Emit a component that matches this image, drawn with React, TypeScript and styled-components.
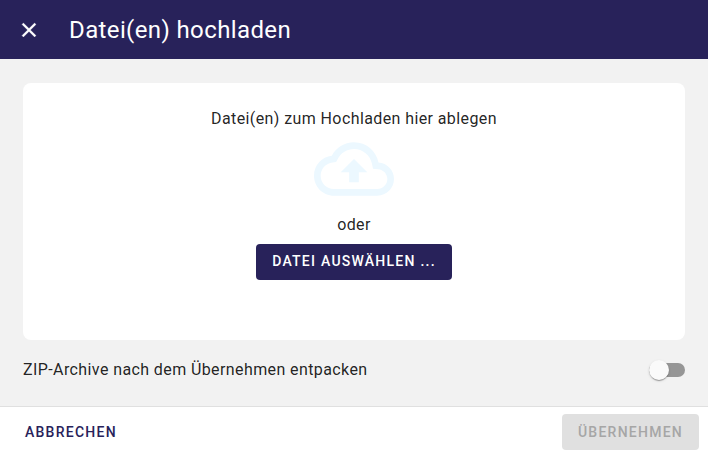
import React, { useState } from "react";
import styled, { createGlobalStyle } from "styled-components";

const GlobalStyle = createGlobalStyle`
  *, *::before, *::after { box-sizing: border-box; }
  html, body { margin: 0; height: 100%; overflow: hidden; background: #fff; }
  body { font-family: Roboto, "Liberation Sans", sans-serif; color: rgba(0, 0, 0, 0.87); }
`;

const Dialog = styled.div`
  display: flex;
  flex-direction: column;
  width: 708px;
  height: 457px;
  background: #fff;
`;

const Header = styled.header`
  display: flex;
  align-items: center;
  flex: none;
  height: 59px;
  padding-left: 17px;
  gap: 28px;
  color: #fff;
  background: #28225a;
`;

const CloseButton = styled.button`
  display: flex;
  padding: 0;
  border: 0;
  color: inherit;
  background: none;
`;

const Title = styled.h1`
  margin: 0;
  font-size: 24px;
  font-weight: 400;
  line-height: 32px;
  letter-spacing: 0.38px;
`;

const Content = styled.main`
  display: flex;
  flex-direction: column;
  flex: none;
  height: 347px;
  padding: 24px 23px 0;
  background: #f2f2f2;
`;

const DropZone = styled.section`
  display: flex;
  flex-direction: column;
  align-items: center;
  height: 257px;
  padding-top: 24px;
  border-radius: 8px;
  background: #fff;
`;

const Text = styled.span`
  font-size: 16px;
  line-height: 24px;
  letter-spacing: 0.4px;
`;

const CloudIcon = styled.svg`
  display: block;
  width: 80px;
  height: 80px;
  margin: -2px 0 4px;
  fill: #ecf8ff;
`;

const Button = styled.button<{ $variant: "filled" | "text" | "disabled" }>`
  height: 36px;
  padding: 0 ${(p) => (p.$variant === "text" ? 8 : 16)}px;
  border: 0;
  border-radius: 4px;
  font: 500 14px/36px Roboto, sans-serif;
  letter-spacing: 1.25px;
  text-transform: uppercase;
  white-space: nowrap;
  color: ${(p) => ({ filled: "#fff", text: "#28225a", disabled: "#a6a6a6" })[p.$variant]};
  background: ${(p) => ({ filled: "#28225a", text: "transparent", disabled: "#e0e0e0" })[p.$variant]};
`;

const SelectButton = styled(Button)`
  margin-top: 7px;
  line-height: 34px;
  padding-bottom: 2px;
`;

const OptionRow = styled.div`
  display: flex;
  align-items: center;
  justify-content: space-between;
  height: 60px;
`;

const Track = styled.button<{ $on: boolean }>`
  display: flex;
  align-items: center;
  justify-content: ${(p) => (p.$on ? "flex-end" : "flex-start")};
  width: 36px;
  height: 14px;
  padding: 0;
  border: 0;
  border-radius: 7px;
  background: ${(p) => (p.$on ? "#938fac" : "#969696")};
`;

const Thumb = styled.span`
  flex: none;
  width: 20px;
  height: 20px;
  border-radius: 50%;
  background: #fafafa;
  box-shadow: 0 2px 1px -1px rgba(0, 0, 0, 0.2), 0 1px 1px rgba(0, 0, 0, 0.14),
    0 1px 3px rgba(0, 0, 0, 0.12);
`;

const Footer = styled.footer`
  display: flex;
  align-items: center;
  justify-content: space-between;
  flex: none;
  height: 51px;
  padding: 0 9px 0 17px;
  border-top: 1px solid #e0e0e0;
`;

export default function App() {
  const [unpack, setUnpack] = useState(false);
  return (
    <>
      <GlobalStyle />
      <Dialog role="dialog" aria-label="Datei(en) hochladen">
        <Header>
          <CloseButton aria-label="Schließen">
            <svg width="24" height="24" viewBox="0 0 24 24" fill="currentColor" stroke="currentColor" strokeWidth="0.3">
              <path d="M19 6.41 17.59 5 12 10.59 6.41 5 5 6.41 10.59 12 5 17.59 6.41 19 12 13.41 17.59 19 19 17.59 13.41 12z" />
            </svg>
          </CloseButton>
          <Title>Datei(en) hochladen</Title>
        </Header>
        <Content>
          <DropZone>
            <Text>Datei(en) zum Hochladen hier ablegen</Text>
            <CloudIcon viewBox="0 0 24 24">
              <path d="M19.35 10.04C18.67 6.59 15.64 4 12 4 9.11 4 6.6 5.64 5.35 8.04 2.34 8.36 0 10.91 0 14c0 3.31 2.69 6 6 6h13c2.76 0 5-2.24 5-5 0-2.64-2.05-4.78-4.65-4.96zM19 18H6c-2.21 0-4-1.79-4-4 0-2.05 1.53-3.76 3.56-3.97l1.07-.11.5-.95C8.08 7.14 9.94 6 12 6c2.62 0 4.88 1.86 5.39 4.43l.3 1.5 1.53.11c1.56.1 2.78 1.41 2.78 2.96 0 1.65-1.35 3-3 3zM8 13h2.55v3h2.9v-3H16l-4-4z" />
            </CloudIcon>
            <Text>oder</Text>
            <SelectButton $variant="filled">Datei auswählen ...</SelectButton>
          </DropZone>
          <OptionRow>
            <Text>ZIP-Archive nach dem Übernehmen entpacken</Text>
            <Track
              role="switch"
              aria-label="ZIP-Archive entpacken"
              aria-checked={unpack}
              $on={unpack}
              onClick={() => setUnpack(!unpack)}
            >
              <Thumb />
            </Track>
          </OptionRow>
        </Content>
        <Footer>
          <Button $variant="text">Abbrechen</Button>
          <Button $variant="disabled" disabled>Übernehmen</Button>
        </Footer>
      </Dialog>
    </>
  );
}
